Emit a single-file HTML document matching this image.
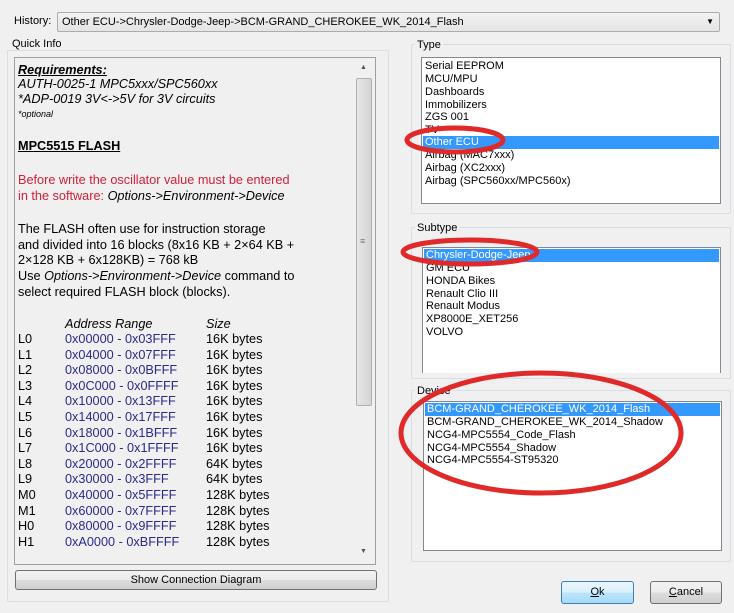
<!DOCTYPE html>
<html><head><style>
body{margin:0;width:734px;height:613px;background:#f0f0f0;font-family:"Liberation Sans",sans-serif;position:relative;overflow:hidden;color:#000}
.a{position:absolute}
.s11{font-size:11px}
.lb{background:#fff;border:1px solid #828790}
.grp{border:1px solid #d5dfe5;border-radius:2px}
.row{position:absolute;left:3px;font-size:11px;height:13px;line-height:13px;white-space:nowrap}
.sel{background:#3399ff;color:#fff;left:1px;right:1px;padding-left:2px}
.t{position:absolute;left:18px;font-size:12.7px;white-space:nowrap;line-height:15px}
.b{color:#2a2a8a}
.btn{position:absolute;border:1px solid #707070;border-radius:3px;background:linear-gradient(#f2f2f2,#ebebeb 50%,#dddddd 51%,#cfcfcf);font-size:11px;text-align:center}
</style></head><body>
<div class="a s11" style="left:14px;top:15px">History:</div>
<div class="a" style="left:57px;top:12px;border:1px solid #acacac;border-radius:2px;background:linear-gradient(#f2f2f2,#e5e5e5);font-size:11px;line-height:18px;padding-left:4px;box-sizing:border-box;width:663px;height:20px">Other ECU-&gt;Chrysler-Dodge-Jeep-&gt;BCM-GRAND_CHEROKEE_WK_2014_Flash<span style="position:absolute;right:5px;top:0;font-size:8px">▼</span></div>

<div class="a grp" style="left:7px;top:50px;width:380px;height:550px"></div>
<div class="a" style="left:10px;top:38px;font-size:11px;background:#f0f0f0;padding:0 2px">Quick Info</div>
<div class="a" style="left:14px;top:57px;width:360px;height:506px;border:1px solid #a0a0a0;background:#f0f0f0"></div>
<div class="a" style="left:356px;top:78px;width:14px;height:326px;background:linear-gradient(90deg,#e6e6e6,#d4d4d4);border:1px solid #b0b0b0;border-radius:2px"></div>
<div class="a" style="left:360px;top:64px;font-size:7px;color:#555">▲</div>
<div class="a" style="left:360px;top:548px;font-size:7px;color:#555">▼</div>
<div class="a" style="left:360px;top:236px;font-size:9px;color:#777">≡</div>

<div class="t" style="top:63px;font-weight:bold;font-style:italic;text-decoration:underline">Requirements:</div>
<div class="t" style="top:77px;font-style:italic">AUTH-0025-1 MPC5xxx/SPC560xx</div>
<div class="t" style="top:92px;font-style:italic">*ADP-0019 3V&lt;-&gt;5V for 3V circuits</div>
<div class="t" style="top:107px;font-style:italic;font-size:9px">*optional</div>
<div class="t" style="top:139px;font-weight:bold;text-decoration:underline">MPC5515 FLASH</div>
<div class="t" style="top:173px;color:#d0203a">Before write the oscillator value must be entered</div>
<div class="t" style="top:189px;color:#d0203a">in the software: <i style="color:#000">Options-&gt;Environment-&gt;Device</i></div>
<div class="t" style="top:222px">The FLASH often use for instruction storage</div>
<div class="t" style="top:238px">and divided into 16 blocks (8x16 KB + 2×64 KB +</div>
<div class="t" style="top:253px">2×128 KB + 6x128KB) = 768 kB</div>
<div class="t" style="top:269px">Use <i>Options-&gt;Environment-&gt;Device</i> command to</div>
<div class="t" style="top:285px">select required FLASH block (blocks).</div>
<div class="t" style="top:317px;left:65px;font-style:italic">Address Range</div>
<div class="t" style="top:317px;left:206px;font-style:italic">Size</div>
<div id="tbl"></div>
<script>
var r=[["L0","0x00000 - 0x03FFF","16K"],["L1","0x04000 - 0x07FFF","16K"],["L2","0x08000 - 0x0BFFF","16K"],["L3","0x0C000 - 0x0FFFF","16K"],["L4","0x10000 - 0x13FFF","16K"],["L5","0x14000 - 0x17FFF","16K"],["L6","0x18000 - 0x1BFFF","16K"],["L7","0x1C000 - 0x1FFFF","16K"],["L8","0x20000 - 0x2FFFF","64K"],["L9","0x30000 - 0x3FFF","64K"],["M0","0x40000 - 0x5FFFF","128K"],["M1","0x60000 - 0x7FFFF","128K"],["H0","0x80000 - 0x9FFFF","128K"],["H1","0xA0000 - 0xBFFFF","128K"]];
var h="";r.forEach(function(x,i){var y=332+i*15.6;h+='<div class="t" style="top:'+y+'px">'+x[0]+'</div><div class="t b" style="top:'+y+'px;left:65px">'+x[1]+'</div><div class="t" style="top:'+y+'px;left:206px">'+x[2]+' bytes</div>';});
document.getElementById("tbl").innerHTML=h;
</script>
<div class="btn" style="left:15px;top:570px;width:360px;height:18px;line-height:18px">Show Connection Diagram</div>

<div class="a grp" style="left:411px;top:44px;width:318px;height:168px"></div>
<div class="a s11" style="left:415px;top:39px;background:#f0f0f0;padding:0 2px">Type</div>
<div class="a lb" style="left:421px;top:57px;width:298px;height:145px">
<div class="row" style="top:2px">Serial EEPROM</div>
<div class="row" style="top:15px">MCU/MPU</div>
<div class="row" style="top:28px">Dashboards</div>
<div class="row" style="top:41px">Immobilizers</div>
<div class="row" style="top:53px">ZGS 001</div>
<div class="row" style="top:66px">TV</div>
<div class="row sel" style="top:78px">Other ECU</div>
<div class="row" style="top:91px">Airbag (MAC7xxx)</div>
<div class="row" style="top:104px">Airbag (XC2xxx)</div>
<div class="row" style="top:117px">Airbag (SPC560xx/MPC560x)</div>
</div>

<div class="a grp" style="left:411px;top:227px;width:318px;height:150px"></div>
<div class="a s11" style="left:415px;top:222px;background:#f0f0f0;padding:0 2px">Subtype</div>
<div class="a lb" style="left:422px;top:247px;width:297px;height:125px;border-bottom:none">
<div class="row sel" style="top:1px">Chrysler-Dodge-Jeep</div>
<div class="row" style="top:14px">GM ECU</div>
<div class="row" style="top:27px">HONDA Bikes</div>
<div class="row" style="top:40px">Renault Clio III</div>
<div class="row" style="top:52px">Renault Modus</div>
<div class="row" style="top:65px">XP8000E_XET256</div>
<div class="row" style="top:78px">VOLVO</div>
</div>

<div class="a grp" style="left:411px;top:390px;width:318px;height:170px"></div>
<div class="a s11" style="left:415px;top:385px;background:#f0f0f0;padding:0 2px">Device</div>
<div class="a lb" style="left:423px;top:401px;width:297px;height:148px">
<div class="row sel" style="top:1px">BCM-GRAND_CHEROKEE_WK_2014_Flash</div>
<div class="row" style="top:14px">BCM-GRAND_CHEROKEE_WK_2014_Shadow</div>
<div class="row" style="top:27px">NCG4-MPC5554_Code_Flash</div>
<div class="row" style="top:40px">NCG4-MPC5554_Shadow</div>
<div class="row" style="top:52px">NCG4-MPC5554-ST95320</div>
</div>

<div class="btn" style="left:561px;top:581px;width:71px;height:21px;line-height:21px;border-color:#3c7fb1;background:linear-gradient(#eaf6fd,#d9f0fc 50%,#bee6fd 51%,#a7d9f5)"><u>O</u>k</div>
<div class="btn" style="left:650px;top:581px;width:70px;height:21px;line-height:21px"><u>C</u>ancel</div>

<svg class="a" style="left:0;top:0" width="734" height="613">
<g fill="none" stroke="#e02a2a" stroke-width="5">
<ellipse cx="455" cy="140" rx="48" ry="12"/>
<ellipse cx="470" cy="252" rx="67" ry="12"/>
<ellipse cx="541" cy="433" rx="140" ry="60"/>
</g></svg>
</body></html>
